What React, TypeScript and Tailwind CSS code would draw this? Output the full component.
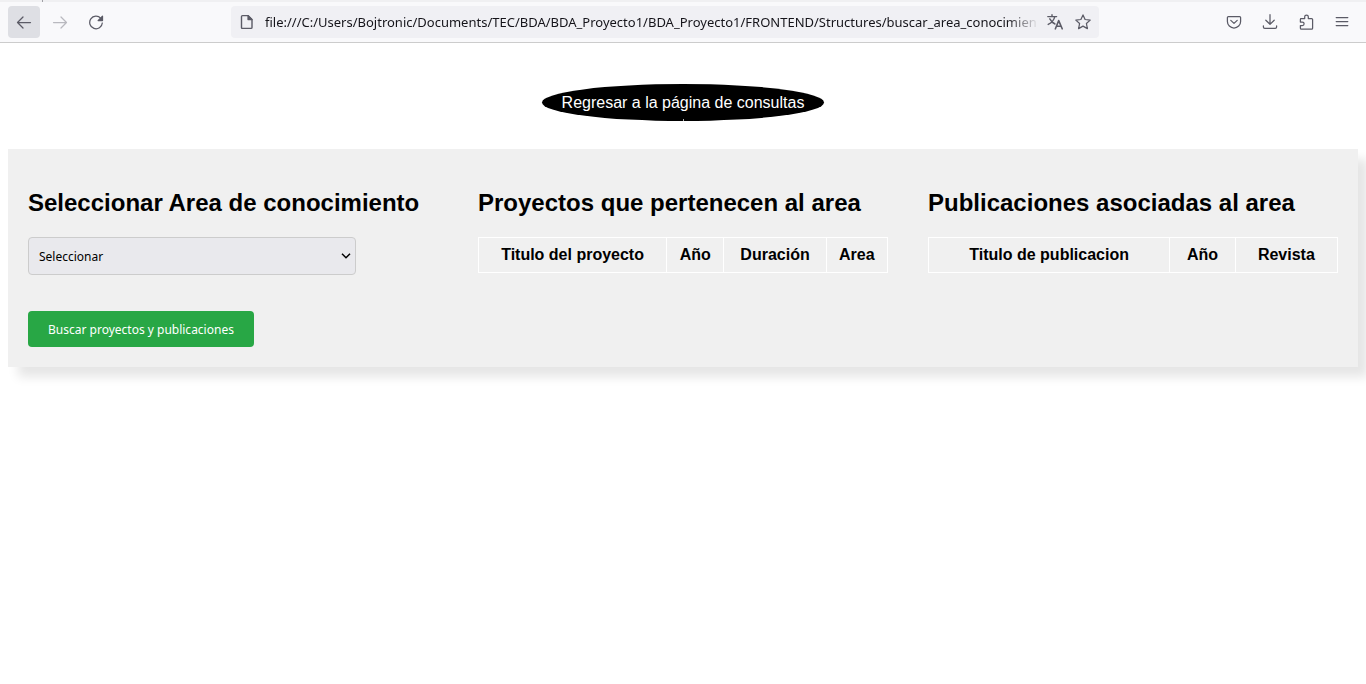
import React from "react";

type IconProps = { children: React.ReactNode; className?: string };

function Icon({ children, className = "" }: IconProps) {
  return (
    <svg
      viewBox="0 0 16 16"
      className={`size-4 shrink-0 ${className}`}
      fill="none"
      stroke="currentColor"
      strokeWidth="1.25"
      strokeLinecap="round"
      strokeLinejoin="round"
      aria-hidden="true"
    >
      {children}
    </svg>
  );
}

type ToolButtonProps = {
  label: string;
  className?: string;
  disabled?: boolean;
  children: React.ReactNode;
};

function ToolButton({ label, className = "", disabled, children }: ToolButtonProps) {
  return (
    <button
      type="button"
      aria-label={label}
      disabled={disabled}
      className={`flex size-8 items-center justify-center rounded text-[#5b5b66] ${className}`}
    >
      {children}
    </button>
  );
}

function BrowserBar() {
  return (
    <header className="border-b border-[#cccccc] bg-[#f9f9fb]">
      <div className="flex h-0.5 bg-[#f0f0f2] pl-[42px]">
        <span className="h-full w-px bg-[#a0a0a5]" />
      </div>
      <div className="flex h-10 items-center px-2">
        <div className="flex w-[223px] shrink-0 gap-1">
          <ToolButton label="Atrás" className="bg-[#dedfe4]">
            <Icon>
              <path d="M14.5 8.5H1.5M7 3L1.5 8.5L7 14" />
            </Icon>
          </ToolButton>
          <ToolButton label="Adelante" disabled className="opacity-40">
            <Icon>
              <path d="M1.5 8.5H14.5M9 3L14.5 8.5L9 14" />
            </Icon>
          </ToolButton>
          <ToolButton label="Recargar">
            <Icon>
              <path d="M12.8 4.4A6.3 6.3 0 1 0 14.3 9" />
              <path d="M14.5 2.2V6.6H10.1Z" fill="currentColor" />
            </Icon>
          </ToolButton>
        </div>
        <div className="flex h-8 max-w-[868px] flex-1 items-center rounded bg-[#f0f0f4] px-2">
          <Icon className="mr-2.5 text-[#5b5b66]">
            <path d="M3.5 1.6H9L13 5.6V13.4Q13 14.4 12 14.4H3.5Q2.5 14.4 2.5 13.4V2.6Q2.5 1.6 3.5 1.6Z" strokeWidth="1.4" />
            <path d="M9 1.6V5.6H13Z" fill="currentColor" />
          </Icon>
          <input
            aria-label="Dirección"
            readOnly
            value="file:///C:/Users/Bojtronic/Documents/TEC/BDA/BDA_Proyecto1/BDA_Proyecto1/FRONTEND/Structures/buscar_area_conocimien"
            className="min-w-0 flex-1 bg-transparent mask-r-from-[calc(100%-32px)] pt-0.5 font-['Noto_Sans',sans-serif] text-[13px] text-[#15141a] outline-none"
          />
          <button type="button" aria-label="Traducir" className="ml-2 text-[#5b5b66]">
            <Icon>
              <path d="M0.8 2.6H9.6M5 0.8V2.6M7.8 2.6C7 6 4 9 1.2 10.4M2.8 4.8C4 7 6 9 8 10" strokeWidth="1.4" />
              <path d="M8.4 14.8L11.7 6.6L15.2 14.8M9.6 12.2H14" strokeWidth="1.6" />
            </Icon>
          </button>
          <button type="button" aria-label="Añadir a marcadores" className="ml-3 text-[#5b5b66]">
            <Icon>
              <path d="M8 0.9L10.1 5.5L15.2 6.1L11.4 9.5L12.4 14.6L8 12.1L3.6 14.6L4.6 9.5L0.8 6.1L5.9 5.5Z" />
            </Icon>
          </button>
        </div>
        <div className="ml-auto flex gap-1">
          <ToolButton label="Guardar en Pocket">
            <Icon>
              <path d="M2.4 2.6H13.6Q14.6 2.6 14.6 3.6V7.4A6.6 6.6 0 0 1 1.4 7.4V3.6Q1.4 2.6 2.4 2.6Z" />
              <path d="M4.8 6.4L8 9.4L11.2 6.4" />
            </Icon>
          </ToolButton>
          <ToolButton label="Descargas">
            <Icon>
              <path d="M8 0.7V10.2M3.8 6.2L8 10.3L12.2 6.2M1.4 11.8V13Q1.4 14.4 2.8 14.4H13.2Q14.6 14.4 14.6 13V11.8" />
            </Icon>
          </ToolButton>
          <ToolButton label="Extensiones">
            <Icon>
              <path d="M2.6 4.6H6.7V2.8A1.8 1.8 0 0 1 10.3 2.8V4.6H13.6Q14.6 4.6 14.6 5.6V14.2Q14.6 15.2 13.6 15.2H3.4Q2.4 15.2 2.4 14.2V11.6H4.3A1.8 1.8 0 0 0 4.3 8H2.4V5.4Q2.4 4.6 3.2 4.6" />
            </Icon>
          </ToolButton>
          <ToolButton label="Abrir menú">
            <Icon>
              <path d="M2.2 3.5H13.8M2.2 7.5H13.8M2.2 11.5H13.8" />
            </Icon>
          </ToolButton>
        </div>
      </div>
    </header>
  );
}

function HeaderTable({ label, columns }: { label: string; columns: { name: string; width: string }[] }) {
  return (
    <table aria-label={label} className="w-full border-collapse">
      <thead>
        <tr>
          {columns.map((column) => (
            <th
              key={column.name}
              scope="col"
              className={`border border-white py-2 text-center text-base leading-[18px] font-bold ${column.width}`}
            >
              {column.name}
            </th>
          ))}
        </tr>
      </thead>
    </table>
  );
}

const projectColumns = [
  { name: "Titulo del proyecto", width: "w-[46%]" },
  { name: "Año", width: "w-[14%]" },
  { name: "Duración", width: "w-[25%]" },
  { name: "Area", width: "w-[15%]" },
];

const publicationColumns = [
  { name: "Titulo de publicacion", width: "w-[59%]" },
  { name: "Año", width: "w-[16%]" },
  { name: "Revista", width: "w-[25%]" },
];

function Heading({ children }: { children: React.ReactNode }) {
  return <h2 className="mb-5 text-2xl leading-7 font-bold">{children}</h2>;
}

export default function App() {
  return (
    <div className="min-h-screen overflow-x-hidden bg-white font-['Liberation_Sans',Arial,sans-serif] text-black">
      <BrowserBar />
      <main className="px-2 pt-[41px]">
        <div className="flex justify-center">
          <a
            href="#consultas"
            className="relative rounded-[50%] bg-black px-5 py-2.5 text-base leading-[17px] text-white"
          >
            Regresar a la página de consultas
            <span className="absolute bottom-0 left-1/2 h-0.5 w-px bg-[#b0b0b0]" />
          </a>
        </div>
        <div className="mt-7 grid grid-cols-3 bg-[#f0f0f0] shadow-[10px_10px_10px_rgba(0,0,0,0.1)]">
          <section className="px-5 pt-10 pb-5">
            <Heading>Seleccionar Area de conocimiento</Heading>
            <div className="relative w-4/5">
              <select
                aria-label="Area de conocimiento"
                className="block h-[38px] w-full appearance-none rounded border border-[#cccccc] bg-[#e9e9ed] px-2.5 pt-0.5 font-['Noto_Sans',sans-serif] text-xs text-black"
              >
                <option>Seleccionar</option>
              </select>
              <svg
                viewBox="0 0 10 6"
                className="pointer-events-none absolute top-4 right-[5px] h-1.5 w-2.5"
                fill="none"
                stroke="currentColor"
                strokeWidth="1.5"
                aria-hidden="true"
              >
                <path d="M1 0.8L5 4.8L9 0.8" />
              </svg>
            </div>
            <button
              type="button"
              className="mt-9 block h-9 rounded bg-[#28a745] px-5 pt-0.5 font-['Noto_Sans',sans-serif] text-xs text-white"
            >
              Buscar proyectos y publicaciones
            </button>
          </section>
          <section className="px-5 pt-10 pb-5">
            <Heading>Proyectos que pertenecen al area</Heading>
            <HeaderTable label="Proyectos" columns={projectColumns} />
          </section>
          <section className="px-5 pt-10 pb-5">
            <Heading>Publicaciones asociadas al area</Heading>
            <HeaderTable label="Publicaciones" columns={publicationColumns} />
          </section>
        </div>
      </main>
    </div>
  );
}
